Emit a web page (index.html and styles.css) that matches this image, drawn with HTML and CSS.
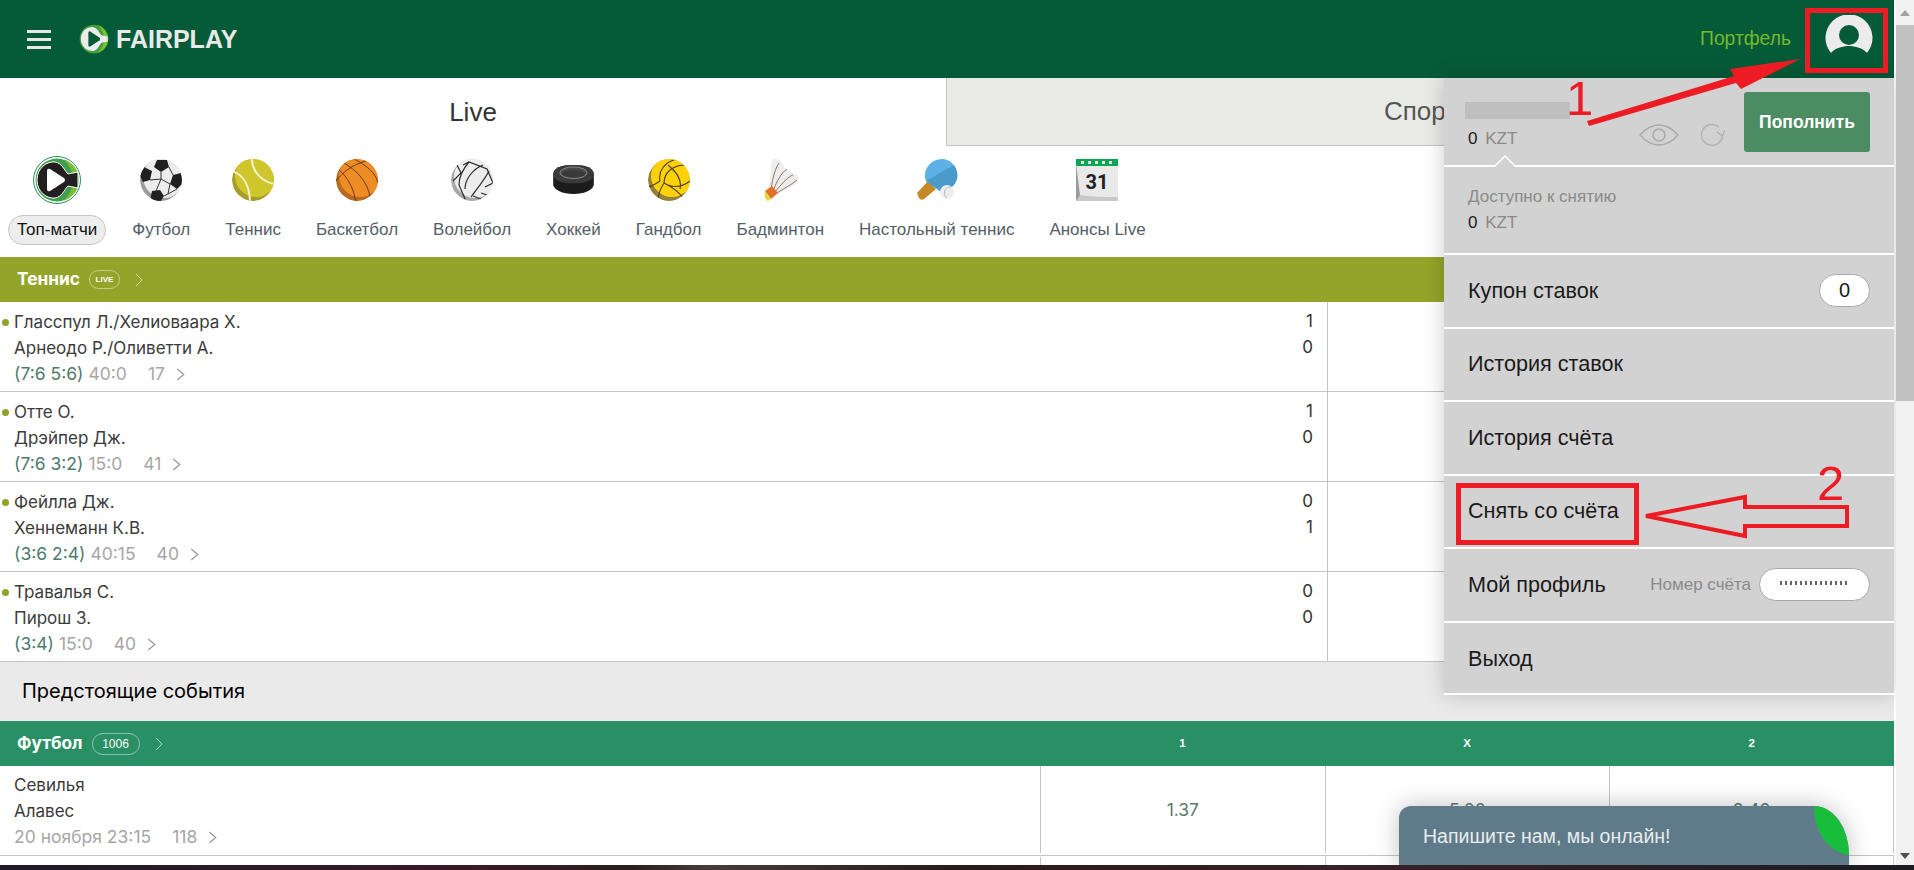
FILE: index.html
```html
<!DOCTYPE html>
<html lang="ru">
<head>
<meta charset="utf-8">
<title>Fairplay</title>
<link rel="stylesheet" href="styles.css">
</head>
<body>
<svg class="defs" width="0" height="0" aria-hidden="true"><defs><clipPath id="ball"><circle cx="21" cy="21" r="21"/></clipPath></defs></svg>
<div class="app">
  <main class="main">
    <header class="topbar">
      <div class="burger"><i></i><i></i><i></i></div>
      <svg class="logo" viewBox="0 0 48 48"><circle cx="24" cy="24" r="23" fill="#3f9f3f"/><path d="M30 2A23 23 0 0 1 30 46C38 38 40 32 40 24S38 10 30 2Z" fill="#7cc232"/><path d="M3 24C3 11 14 4 23 5C30 6 32 14 36 18L46 20V28L36 30C32 34 30 42 23 43C14 44 3 37 3 24Z" fill="#ececec"/><path d="M15 14L15 34Q15 37 18 36L33 26Q35 24 33 22L18 12Q15 11 15 14Z" fill="#055b38"/></svg>
      <span class="brand">FAIRPLAY</span>
      <span class="portfolio">Портфель</span>
      <svg class="avatar" viewBox="0 0 48 40"><path d="M6 38A23.500 23.500 0 1 1 42 38C38 33 30 31 24 31S10 33 6 38Z" fill="#ececec"/><circle cx="24" cy="20" r="10" fill="#055b38"/></svg>
    </header>

    <nav class="tabs">
      <div class="tab tab-live">Live</div>
      <div class="tab tab-sport">Спорт</div>
    </nav>

    <div class="sports">
      <div class="sport active">
        <svg class="ic ic-top" viewBox="0 0 48 48"><circle cx="24" cy="24" r="23.500" fill="#fff" stroke="#2b8f62" stroke-width="1"/><circle cx="24" cy="24" r="21.500" fill="#3fa04c"/><path d="M31 3.500A21.500 21.500 0 0 1 31 44.500C38 37 40 31 40 24S38 11 31 3.500Z" fill="#7dbb3a"/><path d="M4 24C4 12 14 5 22 6C29 7 31 14 35 18L45 16V32L35 30C31 34 29 41 22 42C14 43 4 36 4 24Z" fill="#231f20" stroke="#fff" stroke-width="1"/><path d="M14 15L14 33Q14 36 17 35L31 26Q33 24 31 22L17 13Q14 12 14 15Z" fill="#fff"/></svg>
        <span class="sport-name">Топ-матчи</span>
      </div>
      <div class="sport">
        <svg class="ic" viewBox="0 0 42 42"><g clip-path="url(#ball)"><circle cx="21" cy="21" r="21" fill="#9b9b9b"/><circle cx="24" cy="18" r="21" fill="#ececec"/><path d="M17 1L27 1L29 8L21 13L14 8Z" fill="#1f1f1f"/><path d="M33 16L41 14L43 24L37 30L30 25Z" fill="#1f1f1f"/><path d="M4 8L12 12L10 21L3 23L-1 15Z" fill="#1f1f1f"/><path d="M12 32L20 31L24 37L20 43L10 42Z" fill="#1f1f1f"/><path d="M21 13V20M21 20L30 25M21 20L10 21M21 20L16 32M30 25L28 35M24 37L28 35L37 30M29 8L33 16" stroke="#333" fill="none"/></g></svg>
        <span class="sport-name">Футбол</span>
      </div>
      <div class="sport">
        <svg class="ic" viewBox="0 0 42 42"><g clip-path="url(#ball)"><circle cx="21" cy="21" r="21" fill="#a59c2a"/><circle cx="24" cy="17" r="21" fill="#cfc62b"/><path d="M20 0C20 14 32 24 44 25" stroke="#f3f1d0" stroke-width="2" fill="none"/><path d="M0 12C12 16 18 28 18 44" stroke="#f3f1d0" stroke-width="2" fill="none"/></g></svg>
        <span class="sport-name">Теннис</span>
      </div>
      <div class="sport">
        <svg class="ic" viewBox="0 0 42 42"><g clip-path="url(#ball)"><circle cx="21" cy="21" r="21" fill="#b8681f"/><circle cx="24" cy="17" r="21" fill="#ee8c26"/><path d="M30 2C16 6 8 12 0 22M8 4C22 12 32 24 34 38M2 10C12 18 18 30 20 44M18 0C30 6 40 14 42 24" stroke="#6a3d17" stroke-width="1" fill="none"/></g></svg>
        <span class="sport-name">Баскетбол</span>
      </div>
      <div class="sport">
        <svg class="ic" viewBox="0 0 42 42"><g clip-path="url(#ball)"><circle cx="21" cy="21" r="21" fill="#a8a8a8"/><circle cx="24" cy="18" r="21" fill="#ededed"/><path d="M18 3C12 10 8 18 8 26L14 40M32 6C22 10 14 20 14 30M38 12C34 20 26 30 20 38M2 22L10 14L6 6M12 6L18 3L36 10L42 24M22 37L30 40M30 34L36 36M34 28L42 24" stroke="#2b2b2b" stroke-width="1.200" fill="none"/></g></svg>
        <span class="sport-name">Волейбол</span>
      </div>
      <div class="sport">
        <svg class="ic ic-puck" viewBox="0 0 42 30"><path d="M0 10C0 3 8 0 21 0S42 3 42 10V20C42 26 32 30 21 30S0 26 0 20Z" fill="#1c1c1c"/><path d="M0 10C0 3 8 0 21 0S42 3 42 10C42 16 32 19 21 19S0 16 0 10Z" fill="#3a3a3a"/><ellipse cx="21" cy="8" rx="14" ry="6" fill="#4a4a4a" stroke="#8a8a8a"/><ellipse cx="21" cy="9" rx="12" ry="4" fill="#3a3a3a"/></svg>
        <span class="sport-name">Хоккей</span>
      </div>
      <div class="sport">
        <svg class="ic" viewBox="0 0 42 42"><g clip-path="url(#ball)"><circle cx="21" cy="21" r="21" fill="#94803a"/><circle cx="24" cy="17" r="21" fill="#ffd208"/><path d="M28 0C16 4 10 12 12 22M38 6C24 6 16 14 16 24C24 28 32 34 36 40M12 22C6 26 2 28 0 28M16 24C12 30 10 36 10 42M42 22C32 30 22 28 16 24M20 6C30 14 34 22 32 30" stroke="#4c3c12" stroke-width="1.100" fill="none"/></g></svg>
        <span class="sport-name">Гандбол</span>
      </div>
      <div class="sport">
        <svg class="ic" viewBox="0 0 42 42"><path d="M16 0C22 0 24 6 26 10L38 16C41 20 38 26 32 28L14 36L9 30L12 14C12 6 12 0 16 0Z" fill="#ededed"/><path d="M12 30C14 18 16 10 20 4M14 32C18 22 22 14 28 10M16 33C22 26 28 18 34 16M18 34C24 30 32 26 38 21" stroke="#7a5a3a" stroke-width="0.800" fill="none"/><path d="M6 32L13 27L19 34L12 40Z" fill="#e2702a"/><path d="M6 32L12 40L9 42C6 41 5 36 6 32Z" fill="#e8d93a"/></svg>
        <span class="sport-name">Бадминтон</span>
      </div>
      <div class="sport">
        <svg class="ic ic-rack" viewBox="0 0 42 42"><path d="M1 34L12 22L20 30L8 40Q5 42 3 39Z" fill="#c48a28"/><path d="M10 22C6 12 14 0 26 0C36 0 42 10 41 18C40 28 30 33 24 32Z" fill="#5db2e5"/><path d="M38 6C42 12 42 18 41 20C39 28 30 33 24 32L10 22Z" fill="#4a9bc9"/><circle cx="31" cy="33" r="7" fill="#ededed"/><path d="M35 28A6 6 0 0 0 31 39" stroke="#bbb" fill="none"/></svg>
        <span class="sport-name">Настольный теннис</span>
      </div>
      <div class="sport">
        <svg class="ic" viewBox="0 0 42 42"><path d="M0 0H42V42H0Z" fill="#e9e9e9"/><path d="M0 40L4 36C16 38 30 38 42 38V42H0Z" fill="#c9c9c9"/><path d="M0 4L4 36L0 42Z" fill="#9a9a9a"/><path d="M0 0H42V7H0Z" fill="#0aa653"/><path d="M5 0H8V3H5ZM12 0H15V3H12ZM19 0H22V3H19ZM26 0H29V3H26ZM33 0H36V3H33Z" fill="#e9e9e9" transform="translate(0 2)"/><text x="21" y="30" class="cal-num" text-anchor="middle">31</text></svg>
        <span class="sport-name">Анонсы Live</span>
      </div>
    </div>

    <section class="cat cat-live">
      <div class="cat-title">Теннис</div>
      <span class="cat-pill pill-live">LIVE</span>
      <svg class="chev" viewBox="0 0 8 14"><path d="M1 1L7 7L1 13" fill="none" stroke="currentColor"/></svg>
    </section>

    <article class="row">
      <div class="match">
        <div class="teams">
          <div class="team live-dot">Гласспул Л./Хелиоваара Х.</div>
          <div class="team">Арнеодо Р./Оливетти А.</div>
          <div class="meta"><span class="set">(7:6 5:6)</span> 40:0 <span class="cnt">17</span><svg class="arr" viewBox="0 0 8 12"><path d="M1 1L7 6L1 11" fill="none" stroke="currentColor" stroke-width="1.200"/></svg></div>
        </div>
        <div class="score"><div>1</div><div>0</div></div>
      </div>
      <div></div>
    </article>
    <article class="row">
      <div class="match">
        <div class="teams">
          <div class="team live-dot">Отте О.</div>
          <div class="team">Дрэйпер Дж.</div>
          <div class="meta"><span class="set">(7:6 3:2)</span> 15:0 <span class="cnt">41</span><svg class="arr" viewBox="0 0 8 12"><path d="M1 1L7 6L1 11" fill="none" stroke="currentColor" stroke-width="1.200"/></svg></div>
        </div>
        <div class="score"><div>1</div><div>0</div></div>
      </div>
      <div></div>
    </article>
    <article class="row">
      <div class="match">
        <div class="teams">
          <div class="team live-dot">Фейлла Дж.</div>
          <div class="team">Хеннеманн К.В.</div>
          <div class="meta"><span class="set">(3:6 2:4)</span> 40:15 <span class="cnt">40</span><svg class="arr" viewBox="0 0 8 12"><path d="M1 1L7 6L1 11" fill="none" stroke="currentColor" stroke-width="1.200"/></svg></div>
        </div>
        <div class="score"><div>0</div><div>1</div></div>
      </div>
      <div></div>
    </article>
    <article class="row">
      <div class="match">
        <div class="teams">
          <div class="team live-dot">Травалья С.</div>
          <div class="team">Пирош З.</div>
          <div class="meta"><span class="set">(3:4)</span> 15:0 <span class="cnt">40</span><svg class="arr" viewBox="0 0 8 12"><path d="M1 1L7 6L1 11" fill="none" stroke="currentColor" stroke-width="1.200"/></svg></div>
        </div>
        <div class="score"><div>0</div><div>0</div></div>
      </div>
      <div></div>
    </article>

    <h2 class="upcoming">Предстоящие события</h2>

    <section class="cat-grid">
      <div class="cat cat-foot">
        <div class="cat-title">Футбол</div>
        <span class="cat-pill pill-num">1006</span>
        <svg class="chev" viewBox="0 0 8 14"><path d="M1 1L7 7L1 13" fill="none" stroke="currentColor"/></svg>
      </div>
      <div class="col-h">1</div><div class="col-h">X</div><div class="col-h">2</div>
    </section>

    <article class="frow">
      <div class="teams fteams">
        <div class="team">Севилья</div>
        <div class="team">Алавес</div>
        <div class="meta">20 ноября 23:15 <span class="cnt">118</span><svg class="arr" viewBox="0 0 8 12"><path d="M1 1L7 6L1 11" fill="none" stroke="currentColor" stroke-width="1.200"/></svg></div>
      </div>
      <div class="odd">1.37</div><div class="odd">5.00</div><div class="odd odd-last">8.40</div>
    </article>
    <article class="frow frow-next"><div></div><div class="odd"></div><div class="odd"></div><div class="odd odd-last"></div></article>

    <aside class="menu">
      <div class="m-balance">
        <div class="m-bal-left">
          <div class="m-name"></div>
          <div class="m-money">0 <span>KZT</span></div>
        </div>
        <svg class="m-eye" viewBox="0 0 40 22"><path d="M1 11C8 3 14 1 20 1S32 3 39 11C32 19 26 21 20 21S8 19 1 11Z" fill="none" stroke="#a9a9a9" stroke-width="1.300"/><circle cx="20" cy="11" r="6" fill="none" stroke="#a9a9a9" stroke-width="1.500"/></svg>
        <svg class="m-ref" viewBox="0 0 26 24"><path d="M20 4A10.500 10.500 0 1 0 23.500 12" fill="none" stroke="#b0b0b0" stroke-width="1.300"/><path d="M18 9L23.500 13L26 7" fill="none" stroke="#b0b0b0" stroke-width="1.300"/></svg>
        <div class="m-btn">Пополнить</div>
        <svg class="m-notch" viewBox="0 0 22 12"><path d="M0 12L11 1L22 12" fill="#d2d2d2" stroke="#fff" stroke-width="1.500"/></svg>
      </div>
      <div class="m-avail">
        <div class="m-avail-t">Доступно к снятию</div>
        <div class="m-money">0 <span>KZT</span></div>
      </div>
      <div class="m-item">Купон ставок<span class="m-badge">0</span></div>
      <div class="m-item">История ставок</div>
      <div class="m-item">История счёта</div>
      <div class="m-item">Снять со счёта</div>
      <div class="m-item">Мой профиль
        <div class="m-acc"><span class="m-acc-t">Номер счёта</span><span class="m-badge m-badge-w"><i></i></span></div>
      </div>
      <div class="m-item">Выход</div>
    </aside>
  </main>
  <div class="scrollbar">
    <svg class="sb-a" viewBox="0 0 18 25"><path d="M4 16L9 10L14 16Z" fill="#a3a3a3"/></svg>
    <div class="sb-thumb"></div>
    <div class="sb-track"></div>
    <svg class="sb-a" viewBox="0 0 18 18"><path d="M4 6L14 6L9 12Z" fill="#505050"/></svg>
  </div>
</div>
<div class="strip"></div>

<aside class="chat">
  <span>Напишите нам, мы онлайн!</span>
  <svg class="chat-leaf" viewBox="0 0 35 49"><path d="M0 0H35V49C14 46 0 26 0 0Z" fill="#19bd3c"/></svg>
</aside>

<svg class="annot" viewBox="0 0 1914 870">
  <rect x="1807.500" y="10.500" width="78" height="60" fill="none" stroke="#ed1c24" stroke-width="5"/>
  <path d="M1800 59L1730 69L1734 76L1587 121L1589 126L1736 83L1741 89Z" fill="#ed1c24"/>
  <text class="annot-num" x="1566" y="115">1</text>
  <rect x="1458.500" y="485.500" width="178" height="57" fill="none" stroke="#ed1c24" stroke-width="5"/>
  <path d="M1646 516L1745 497V507H1847V526H1745V536Z" fill="none" stroke="#ed1c24" stroke-width="4"/>
  <text class="annot-num" x="1817" y="500">2</text>
</svg>
</body>
</html>
```
FILE: styles.css
```css
* { box-sizing: border-box; }
html, body { margin: 0; height: 870px; overflow: hidden; }
body { font-family: "Liberation Sans", Arial, sans-serif; background: #fff; color: #333; position: relative; width: 1914px; }
.defs { position: absolute; }
.app { display: flex; height: 865px; }
.main { width: 1896px; height: 865px; padding-right: 2px; position: relative; overflow: hidden; background: #fff; }

.topbar { height: 78px; background: #055b38; display: flex; align-items: center; padding: 0 0 0 27px; }
.burger { width: 24px; height: 19px; display: flex; flex-direction: column; justify-content: space-between; margin-top: 1px; }
.burger i { display: block; height: 3px; background: #e8e8e8; }
.logo { width: 30px; height: 30px; margin-left: 28px; }
.brand { font-weight: 700; font-size: 25px; color: #e9e9e9; margin-left: 7px; }
.portfolio { margin-left: auto; color: #76b82a; font-size: 19.300px; }
.avatar { width: 48px; height: 40px; margin: -8px 21px 0 34px; }

.tabs { display: flex; height: 68px; }
.tab { display: flex; align-items: center; justify-content: center; font-size: 26px; }
.tab-live { width: 946px; background: #fff; color: #333; padding-top: 1px; }
.tab-sport { flex: 1; background: #e9eae5; border-left: 1px solid #c4c4c4; border-bottom: 1px solid #c4c4c4; color: #555; }

.sports { height: 111px; display: flex; gap: 17px; padding: 10px 0 0 8px; align-items: flex-start; }
.sport { display: flex; flex-direction: column; align-items: center; }
.ic { width: 42px; height: 42px; margin-top: 3px; margin-bottom: 14px; }
.ic-top { width: 48px; height: 48px; margin-top: 0; margin-bottom: 11px; }
.ic-puck { width: 43px; height: 29px; margin-top: 9px; margin-bottom: 21px; }
.sport-name { font-size: 17px; color: #555d66; height: 30px; line-height: 28px; padding: 0 8px; border: 1px solid transparent; border-radius: 15px; white-space: nowrap; }
.sport.active .sport-name { background: #ededed; border-color: #c6c6c6; color: #111; }
.cal-num { font-family: Roboto, sans-serif; font-weight: 700; font-size: 20px; fill: #222; }

.cat { height: 45px; display: flex; align-items: center; padding-left: 17px; color: #fff; }
.cat-live { background: #93a42a; }
.cat-title { font-family: Inter, sans-serif; font-weight: 700; font-size: 17.300px; margin-top: -2px; }
.cat-pill { border: 1px solid rgba(255,255,255,.45); border-radius: 11px; display: flex; align-items: center; justify-content: center; }
.pill-live { width: 31px; height: 19px; margin-left: 9px; font-size: 8px; font-weight: 700; }
.pill-num { width: 48px; height: 22px; margin-left: 9px; font-size: 12px; }
.chev { width: 8px; height: 14px; margin-left: 15px; color: rgba(255,255,255,.6); }

.row { display: grid; grid-template-columns: 1328px 1fr; height: 90px; border-bottom: 1px solid #c4c4c4; }
.match { display: flex; justify-content: space-between; border-right: 1px solid #c4c4c4; padding: 7px 14px 0 14px; }
.teams { font-family: Inter, sans-serif; font-size: 17px; line-height: 26px; color: #3b3b3b; }
.team { height: 25.500px; position: relative; white-space: nowrap; }
.live-dot::before { content: ""; position: absolute; left: -12px; top: 10px; width: 7px; height: 7px; border-radius: 50%; background: #8fa32a; }
.meta { color: #a6a6a6; font-size: 17.500px; height: 26px; display: flex; align-items: center; gap: 5px; white-space: nowrap; margin-top: 1px; }
.set { color: #4f7a6e; }
.cnt { margin-left: 16px; }
.arr { width: 9px; height: 13px; margin-left: 6px; color: #9a9a9a; }
.score { font-family: Inter, sans-serif; font-size: 17px; line-height: 25.500px; text-align: right; }

.upcoming { margin: 0; height: 59px; background: #eaeaea; color: #000; font-family: Inter, sans-serif; font-weight: 400; font-size: 20px; line-height: 59px; padding-left: 22px; }

.cat-grid { display: grid; grid-template-columns: 1040px repeat(3, 1fr); height: 45px; background: #289064; }
.cat-foot { background: none; }
.col-h { color: #fff; font-weight: 700; font-size: 11.500px; display: flex; align-items: center; justify-content: center; padding-bottom: 1px; }

.frow { display: grid; grid-template-columns: 1040px repeat(3, 1fr); height: 90px; border-bottom: 1px solid #c4c4c4; }
.fteams { padding: 6px 0 0 14px; }
.odd { border-left: 1px solid #c4c4c4; margin-bottom: 2px; display: flex; align-items: center; justify-content: center; font-family: Inter, sans-serif; font-size: 17.500px; color: #5f7a6c; }
.odd-last { border-right: 1px solid #c4c4c4; }
.frow-next .odd { margin-top: 1px; }

.menu { position: absolute; left: 1444px; top: 78px; width: 450px; height: 617px; background: #d2d2d2; box-shadow: 0 0 20px rgba(0,0,0,.2); color: #1a1a1a; border-bottom: 2px solid #fff; }
.m-balance { height: 89px; border-bottom: 2px solid #fff; position: relative; display: flex; padding: 14px 24px 0 24px; }
.m-bal-left { width: 171px; }
.m-name { width: 105px; height: 17px; background: #bfbfbf; margin: 10px 0 10px -3px; }
.m-money { font-size: 17px; line-height: 20px; color: #1a1a1a; }
.m-money span { color: #8a8a8a; margin-left: 3px; }
.m-eye { width: 40px; height: 22px; margin-top: 32px; }
.m-ref { width: 26px; height: 24px; margin: 31px 2px 0 20px; }
.m-btn { width: 126px; height: 60px; margin-left: 17px; background: #4c8c63; border-radius: 3px; color: #fff; font-size: 17.500px; font-weight: 700; display: flex; align-items: center; justify-content: center; }
.m-notch { position: absolute; left: 50px; bottom: -2px; width: 22px; height: 12px; }
.m-avail { height: 88px; border-bottom: 2px solid #fff; padding: 20px 24px 0; }
.m-avail-t { font-size: 17px; line-height: 20px; color: #8a8a8a; margin-bottom: 6px; }
.m-item { height: 73.500px; border-bottom: 2px solid #fff; display: flex; align-items: center; padding: 0 24px; font-size: 21.600px; }
.m-item:last-child { border-bottom: 0; }
.m-badge { margin-left: auto; width: 51px; height: 33px; background: #fff; border: 1px solid #a8a8a8; border-radius: 17px; display: flex; align-items: center; justify-content: center; font-size: 20px; }
.m-acc { margin-left: auto; display: flex; align-items: center; gap: 8px; }
.m-acc-t { font-size: 17px; color: #8a8a8a; }
.m-badge-w { width: 111px; margin-left: 0; }
.m-badge-w i { display: block; width: 70px; height: 4px; background: repeating-linear-gradient(90deg, #222 0 2px, #fff 2px 5px); opacity: .7; margin-top: -3px; }

.scrollbar { width: 18px; height: 865px; background: #f1f1f1; display: flex; flex-direction: column; }
.sb-a { width: 18px; flex: none; }
.sb-a:first-child { height: 25px; }
.sb-a:last-child { height: 18px; }
.sb-thumb { height: 376px; background: #c1c1c1; }
.sb-track { flex: 1; }

.strip { height: 5px; background: linear-gradient(90deg, #1e1a28 0, #3c1a26 25%, #2a1e20 33%, #4a3a3c 37%, #2a1a1c 50%, #3a2028 70%, #1c1c22 100%); position: relative; z-index: 5; }

.chat { position: absolute; left: 1399px; top: 806px; width: 450px; height: 59px; background: #5f7b8a; border-radius: 12px 35px 0 0 / 12px 49px 0 0; box-shadow: 0 0 24px rgba(0,0,0,.25); color: #e8ecee; font-size: 19.500px; padding: 19px 0 0 24px; line-height: 22px; overflow: hidden; }
.chat-leaf { position: absolute; right: 0; top: 0; width: 35px; height: 49px; }

.annot { position: absolute; left: 0; top: 0; width: 1914px; height: 870px; pointer-events: none; }
.annot-num { font-family: "Liberation Sans", sans-serif; font-size: 49px; fill: #ed1c24; }
```
